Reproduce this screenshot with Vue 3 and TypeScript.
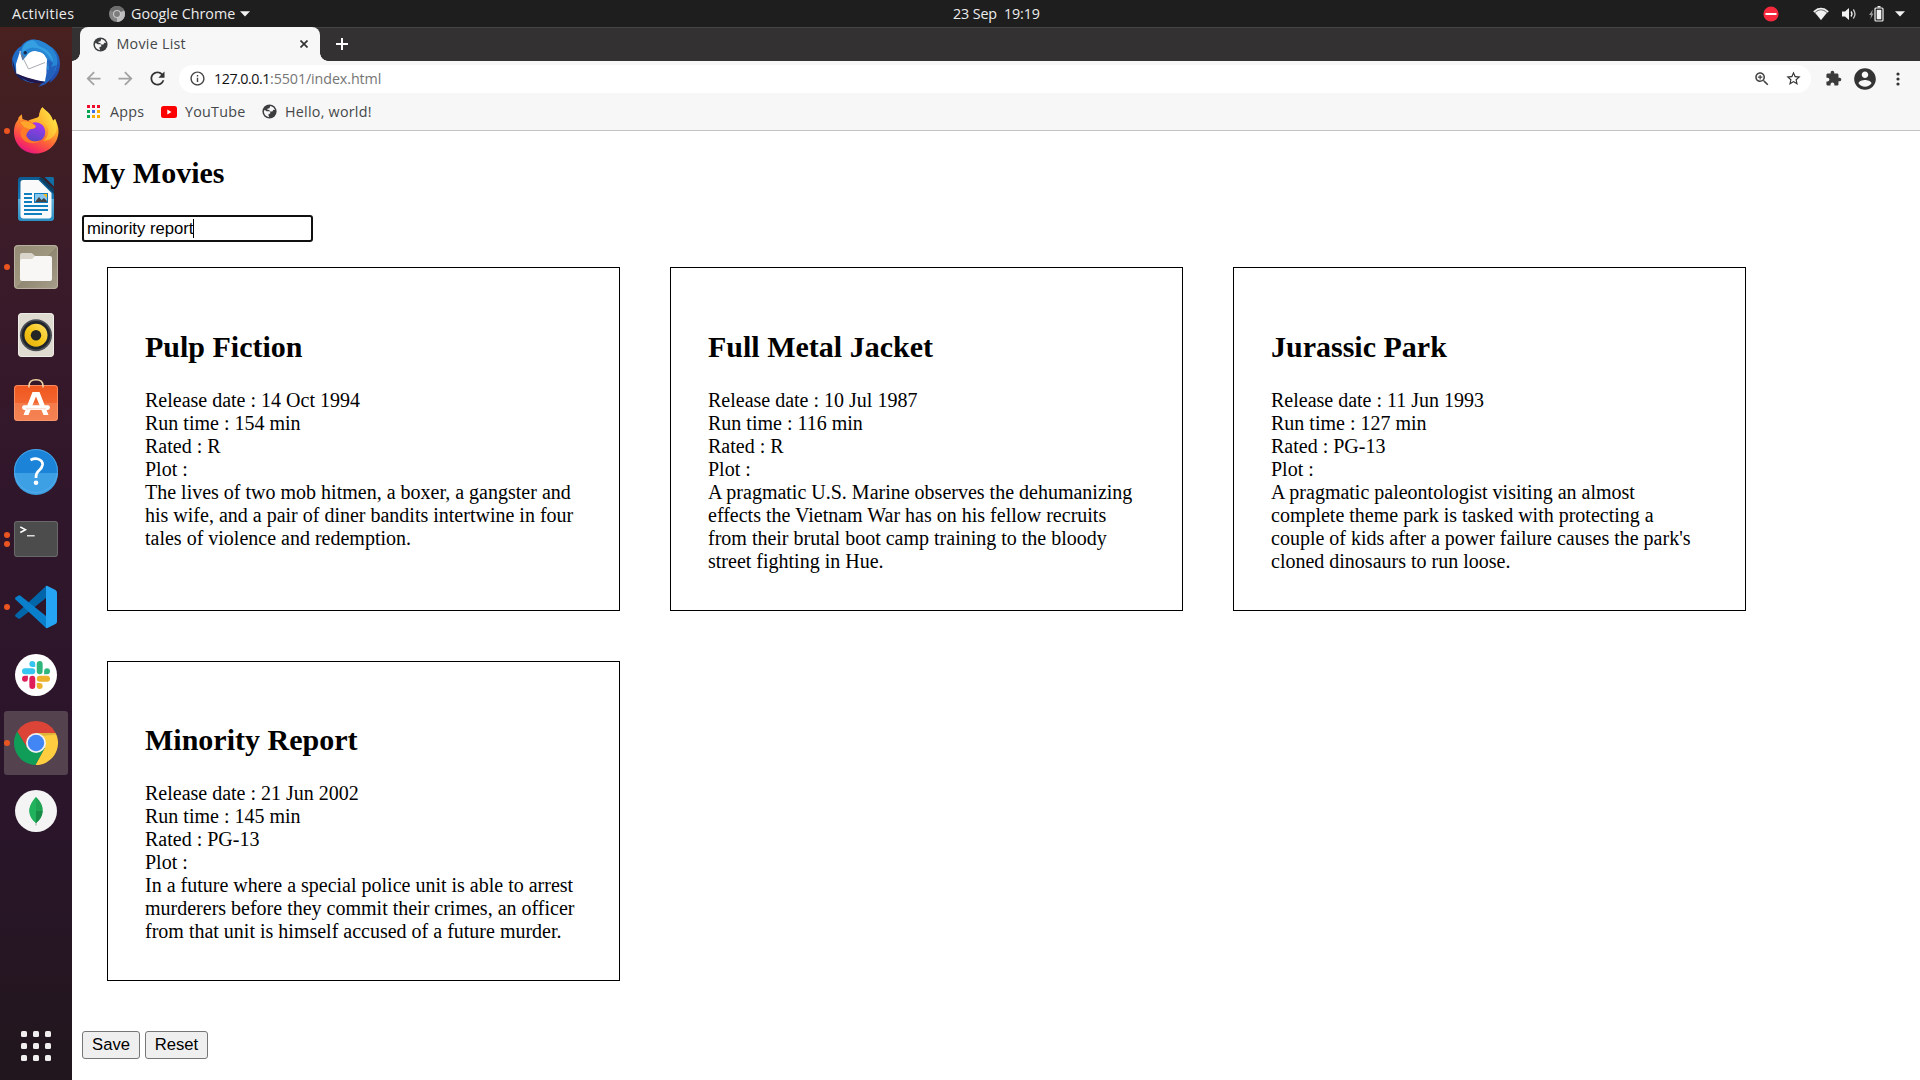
<script setup lang="ts">
interface Movie {
  title: string
  released: string
  runtime: string
  rated: string
  plot: string
}

interface DockItem {
  name: string
  windows: number
  active?: boolean
}

const dock: DockItem[] = [
  { name: 'thunderbird', windows: 0 },
  { name: 'firefox', windows: 1 },
  { name: 'writer', windows: 0 },
  { name: 'files', windows: 1 },
  { name: 'rhythmbox', windows: 0 },
  { name: 'software', windows: 0 },
  { name: 'help', windows: 0 },
  { name: 'terminal', windows: 2 },
  { name: 'vscode', windows: 1 },
  { name: 'slack', windows: 0 },
  { name: 'chrome', windows: 1, active: true },
  { name: 'mongo', windows: 0 },
]

const query = 'minority report'

const movies: Movie[] = [
  {
    title: 'Pulp Fiction',
    released: '14 Oct 1994',
    runtime: '154 min',
    rated: 'R',
    plot: 'The lives of two mob hitmen, a boxer, a gangster and his wife, and a pair of diner bandits intertwine in four tales of violence and redemption.',
  },
  {
    title: 'Full Metal Jacket',
    released: '10 Jul 1987',
    runtime: '116 min',
    rated: 'R',
    plot: 'A pragmatic U.S. Marine observes the dehumanizing effects the Vietnam War has on his fellow recruits from their brutal boot camp training to the bloody street fighting in Hue.',
  },
  {
    title: 'Jurassic Park',
    released: '11 Jun 1993',
    runtime: '127 min',
    rated: 'PG-13',
    plot: "A pragmatic paleontologist visiting an almost complete theme park is tasked with protecting a couple of kids after a power failure causes the park's cloned dinosaurs to run loose.",
  },
  {
    title: 'Minority Report',
    released: '21 Jun 2002',
    runtime: '145 min',
    rated: 'PG-13',
    plot: 'In a future where a special police unit is able to arrest murderers before they commit their crimes, an officer from that unit is himself accused of a future murder.',
  },
]

const appColors = ['#f00b2d', '#f00b2d', '#f00b2d', '#00a651', '#3d6fe8', '#fbad00', '#00a651', '#fbad00', '#fbad00']
</script>

<template>
  <div class="desktop">
    <header class="topbar">
      <div class="topbar-left">
        <span class="activities">Activities</span>
        <svg class="app-glyph" width="16" height="16" viewBox="0 0 16 16">
          <circle cx="8" cy="8" r="8" fill="#858585" />
          <path d="M8 8L1 4.200A8 8 0 0 1 15 4.200z" fill="#6d6d6d" />
          <path d="M8 8L15.200 4.500A8 8 0 0 1 8 16z" fill="#bdbdbd" />
          <circle cx="8" cy="8" r="4" fill="#c9c9c9" />
          <circle cx="8" cy="8" r="2.900" fill="#7d7d7d" />
        </svg>
        <span class="app-name">Google Chrome</span>
        <svg width="10" height="6" viewBox="0 0 10 6"><path d="M0 .3h10L5 5.500z" fill="#f2f2f2" /></svg>
      </div>
      <div class="clock"><span>23 Sep</span><span>19:19</span></div>
      <div class="topbar-right">
        <svg width="16" height="16" viewBox="0 0 16 16">
          <circle cx="8" cy="8" r="7.600" fill="#f5283e" />
          <rect x="2.500" y="7" width="11" height="2" fill="#fff" />
        </svg>
        <svg class="wifi" width="16" height="14" viewBox="0 0 16 14">
          <path d="M.3 4.200Q8-2.500 15.700 4.200L8 13z" fill="#777" />
          <path d="M.3 4.200Q8-2.500 15.700 4.200L14.700 5.400Q8-.7 1.300 5.400z" fill="#f2f2f2" />
          <path d="M2.300 5.800Q8 .8 13.700 5.800L8 13z" fill="#f2f2f2" />
        </svg>
        <svg class="volume" width="16" height="14" viewBox="0 0 16 14">
          <path d="M0 4.500h3L7 1v12L3 9.500H0z" fill="#f2f2f2" />
          <path d="M9 4.500Q11 7 9 9.500" fill="none" stroke="#f2f2f2" stroke-width="1.300" />
          <path d="M11.300 2.500Q14.700 7 11.300 11.500" fill="none" stroke="#c8c8c8" stroke-width="1.300" />
        </svg>
        <svg class="battery" width="16" height="16" viewBox="0 0 16 16">
          <path d="M3.800 3.500L0 9h2L1.500 13L4.500 7.500H3z" fill="#999" />
          <path d="M8.500 0h3v1.500h-3z" fill="#f2f2f2" />
          <rect x="6" y="2" width="8" height="13" rx="1" fill="none" stroke="#f2f2f2" stroke-width="1.200" />
          <rect x="7.700" y="3.800" width="4.600" height="9.500" fill="#f2f2f2" />
        </svg>
        <svg width="10" height="6" viewBox="0 0 10 6"><path d="M0 .3h10L5 5.500z" fill="#f2f2f2" /></svg>
      </div>
    </header>

    <div class="workspace">
      <nav class="dock">
        <div v-for="item in dock" :key="item.name" class="tile" :class="{ active: item.active }">
          <div class="dots"><i v-for="n in item.windows" :key="n"></i></div>

          <svg v-if="item.name === 'thunderbird'" width="48" height="48" viewBox="0 0 48 48">
            <defs>
              <linearGradient id="tb" x1="0" y1="0" x2="1" y2="1">
                <stop offset="0" stop-color="#1d63c0" /><stop offset=".5" stop-color="#2277d0" /><stop offset="1" stop-color="#22389c" />
              </linearGradient>
            </defs>
            <path d="M19.700.5C26 .2 32 3 37 6.500C45 11 48 18 48 25C48 34 43 41 37 44L39 40.500L33 45.500L26 48L31 43C20 46 14 42 11 41L13 41.500C6 40 0 31 0 22C0 16 5 9 9 7.500C12 3 16 1 19.700.5z" fill="url(#tb)" />
            <path d="M.5 20C0 32 5 40 13 42L4 33z" fill="#17215f" />
            <path d="M8 12.500C14 11 26 11 32 15L35 20L34 42.500C25 42 12 39 4.300 34.500L4 25z" fill="#fff" />
            <path d="M5 34.500C13 38.500 24 41 33 43L30 44C20 45 10 41 5 34.500z" fill="#21164d" />
            <path d="M7.500 12L16.500 30L33 23.500" fill="none" stroke="#a9a9b2" stroke-width="1" />
            <path d="M20 1C26 0 34 3 39 9C45 15 47 22 44 29C43 35 38 41 33 44L34 37L37 31L34.500 31L36 23C35 18 32 14 27 12.500C22 11 17 12.500 14.500 17L10.500 21.500L9 14C9 7 13 2 20 1z" fill="#2786d4" />
            <path d="M20 1C25 2 24 6 29 8C37 11 41 17 41 23C37 16 31 10 24 9C18 8 13 10 10.500 15C9 8 13 3 20 1z" fill="#359fe2" />
            <path d="M36 20L41 24L39 28L45 26L42 32L46 30L40 38L33 44L34 37L37 31z" fill="#2360bd" />
            <circle cx="13.200" cy="13.800" r="1.700" fill="#15294f" />
            <path d="M8.500 14.500L10.300 21L13 18z" fill="#61779c" />
          </svg>

          <svg v-else-if="item.name === 'firefox'" width="48" height="48" viewBox="0 0 48 48">
            <defs>
              <linearGradient id="ffa" x1=".8" y1="0" x2=".3" y2="1">
                <stop offset="0" stop-color="#fff14f" /><stop offset=".35" stop-color="#ffb32c" /><stop offset=".62" stop-color="#ff6a35" /><stop offset=".85" stop-color="#f8325a" /><stop offset="1" stop-color="#e31587" />
              </linearGradient>
              <linearGradient id="ffb" x1=".7" y1="0" x2=".4" y2="1">
                <stop offset="0" stop-color="#a838f2" /><stop offset="1" stop-color="#5747c5" />
              </linearGradient>
              <linearGradient id="ffc" x1="1" y1="0" x2="0" y2="1">
                <stop offset="0" stop-color="#fff44a" /><stop offset="1" stop-color="#ff9a25" />
              </linearGradient>
            </defs>
            <path d="M30.300.3C34 4 38 6 40 11L41 14L43 12C45 16 46.700 20 46.500 25C46 37 36 46.500 24 46.500C11 46.500 2 37 2 25C2 19 4 15 6 13L6.500 10.500L9.700 7.300L10.500 12L16 14C20 11 25 12 27 9C28 6 28 3 30.300.3z" fill="url(#ffa)" />
            <path d="M30.300.3C26 6 26 12 32 16C38 20 38 29 31 34C37 34 42 30 44 25C46 18 43 12 43 12L41 14C39 7 34 5 30.300.3z" fill="url(#ffc)" />
            <circle cx="23.500" cy="25" r="9.800" fill="url(#ffb)" />
            <path d="M6 15C10 12 18 13 23 18C25 20 23 22 19 22C17 23 15 25 14 29C16 34 23 36 29 33C24 38 14 37 10 31C7 26 9 22 12 20L7 18z" fill="#ff7a28" />
            <path d="M8 15C13 13 19 15 23.500 19C24 21 21 22 17 22L12 20z" fill="#ffa62b" />
          </svg>

          <svg v-else-if="item.name === 'writer'" width="48" height="48" viewBox="0 0 48 48">
            <defs>
              <linearGradient id="wr" x1="0" y1="0" x2="0" y2="1">
                <stop offset="0" stop-color="#0d5b91" /><stop offset=".5" stop-color="#1679b5" /><stop offset=".51" stop-color="#5eafd9" /><stop offset="1" stop-color="#2a8fc5" />
              </linearGradient>
            </defs>
            <path d="M9 2H28L42 16V43Q42 46 39 46H9Q6 46 6 43V5Q6 2 9 2z" fill="url(#wr)" />
            <path d="M11 5H26.500L39.500 18V40.500Q39.500 43.500 36.500 43.500H11.500Q8.500 43.500 8.500 40.500V7.500Q8.500 5 11 5z" fill="#fafafa" />
            <path d="M26.500 3L30.500 3L42 14V19z" fill="#0b3f63" />
            <path d="M32.500 2H40.500Q42 2 42 3.500V11.500z" fill="#126fa5" />
            <path d="M12 19h8M12 23h8M12 27h8M12 31h24M12 35h24M12 39h18" stroke="#0f7fc0" stroke-width="2" />
            <rect x="22" y="18" width="14" height="10" fill="#0f7fc0" />
            <rect x="23" y="19" width="12" height="8" fill="#86c7ee" />
            <path d="M23 27L27 22L29.500 25L32 23L35 26V27z" fill="#444" />
            <path d="M31 19h4v4z" fill="#f8b81d" />
          </svg>

          <svg v-else-if="item.name === 'files'" width="48" height="48" viewBox="0 0 48 48">
            <defs>
              <linearGradient id="fi" x1="0" y1="0" x2="1" y2="1">
                <stop offset="0" stop-color="#948a75" /><stop offset=".5" stop-color="#a0977f" /><stop offset=".51" stop-color="#918873" /><stop offset="1" stop-color="#a69e8a" />
              </linearGradient>
            </defs>
            <rect x="2" y="2" width="44" height="44" rx="4" fill="url(#fi)" />
            <rect x="2.500" y="2.500" width="43" height="43" rx="3.500" fill="none" stroke="#b8b1a1" />
            <path d="M8 12Q8 10 10 10H19Q20 10 21 11L23.500 13.500H38V20H8z" fill="#d9d5cb" />
            <path d="M8 18Q8 16 10 16H20L23 13H38Q40 13 40 15V36Q40 38 38 38H10Q8 38 8 36z" fill="#f8f7f5" />
          </svg>

          <svg v-else-if="item.name === 'rhythmbox'" width="48" height="48" viewBox="0 0 48 48">
            <defs>
              <linearGradient id="rb" x1="0" y1="1" x2="1" y2="0">
                <stop offset="0" stop-color="#e6ad0b" /><stop offset=".5" stop-color="#f5c71b" /><stop offset="1" stop-color="#ffe06e" />
              </linearGradient>
            </defs>
            <rect x="6" y="2" width="36" height="44" rx="4" fill="#dfdbd1" />
            <rect x="6.500" y="2.500" width="35" height="43" rx="3.500" fill="none" stroke="#eeece6" />
            <circle cx="24" cy="24.200" r="16" fill="#4b4f55" />
            <circle cx="24" cy="24.200" r="14.200" fill="#20242b" />
            <circle cx="24" cy="24.200" r="11.500" fill="url(#rb)" />
            <circle cx="24" cy="24.200" r="5.200" fill="#252525" />
          </svg>

          <svg v-else-if="item.name === 'software'" width="48" height="48" viewBox="0 0 48 48">
            <defs>
              <linearGradient id="so" x1="0" y1="0" x2="0" y2="1">
                <stop offset="0" stop-color="#f0571f" /><stop offset=".5" stop-color="#f3652f" /><stop offset=".51" stop-color="#f47b4b" /><stop offset="1" stop-color="#f48354" />
              </linearGradient>
            </defs>
            <rect x="2" y="6" width="44" height="36" rx="3.500" fill="url(#so)" />
            <rect x="2.500" y="6.500" width="43" height="35" rx="3" fill="none" stroke="#f79a74" stroke-width=".8" />
            <path d="M17 8.500V7Q17 .8 24 .8T31 7V8.500" fill="none" stroke="#f1d3a3" stroke-width="1.600" />
            <path d="M11.500 36L20.500 13H27.500L36.500 36H31.500L24 17.500L16.500 36z" fill="#fff" />
            <rect x="10" y="26.300" width="28" height="4.600" rx="2.300" fill="#fff" />
            <path d="M14 29.800h20" stroke="#f7c9b6" stroke-width=".8" />
          </svg>

          <svg v-else-if="item.name === 'help'" width="48" height="48" viewBox="0 0 48 48">
            <circle cx="24" cy="24" r="22" fill="#1b84d8" />
            <path d="M2 26H46A22 22 0 0 1 2 26z" fill="#3d9fe4" />
            <circle cx="24" cy="24" r="21.500" fill="none" stroke="#5db2ec" stroke-width=".7" />
            <path d="M18.500 13Q23 11 26 12Q31 13.500 30.500 18Q30 21 27 23.500Q24 26 24 30V31" fill="none" stroke="#fff" stroke-width="2.700" />
            <circle cx="24" cy="35.700" r="2.300" fill="#fff" />
          </svg>

          <svg v-else-if="item.name === 'terminal'" width="48" height="48" viewBox="0 0 48 48">
            <rect x="2" y="6" width="44" height="36" rx="3" fill="#4c4c4c" />
            <rect x="2.500" y="6.500" width="43" height="35" rx="2.500" fill="none" stroke="#6c6c6c" stroke-width=".9" />
            <path d="M8.300 12L13.500 14.700L8.300 17.500" fill="none" stroke="#fff" stroke-width="1.500" />
            <path d="M15 20.800h7.700" stroke="#fff" stroke-width="1.200" />
          </svg>

          <svg v-else-if="item.name === 'vscode'" width="48" height="48" viewBox="0 0 48 48">
            <path d="M3.500 31.500Q2.500 32.500 3.500 33.500L6 35.500Q7.500 36 8.500 35.300L34 15V3z" fill="#0065a9" />
            <path d="M3.500 16.500Q2.500 15.500 3.500 14.500L6 12.700Q7.500 12 8.500 12.700L34 33V45z" fill="#0a7fcb" />
            <path d="M34 3Q34.500 2.700 35.500 3L43.500 7Q45 8 45 9.500V38.500Q45 40 43.500 41L35.500 45Q34.500 45.300 34 45z" fill="#24a4f2" />
          </svg>

          <svg v-else-if="item.name === 'slack'" width="48" height="48" viewBox="0 0 48 48">
            <circle cx="24" cy="24" r="21" fill="#fff" />
            <g transform="translate(10 10) scale(1.167)">
              <path fill="#e01e5a" d="M5.042 15.165a2.528 2.528 0 0 1-2.520 2.523A2.528 2.528 0 0 1 0 15.165a2.527 2.527 0 0 1 2.522-2.520h2.520v2.520zM6.313 15.165a2.527 2.527 0 0 1 2.521-2.520 2.527 2.527 0 0 1 2.521 2.520v6.313A2.528 2.528 0 0 1 8.834 24a2.528 2.528 0 0 1-2.521-2.522v-6.313z" />
              <path fill="#36c5f0" d="M8.834 5.042a2.528 2.528 0 0 1-2.521-2.520A2.528 2.528 0 0 1 8.834 0a2.528 2.528 0 0 1 2.521 2.522v2.520H8.834zM8.834 6.313a2.528 2.528 0 0 1 2.521 2.521 2.528 2.528 0 0 1-2.521 2.521H2.522A2.528 2.528 0 0 1 0 8.834a2.528 2.528 0 0 1 2.522-2.521h6.312z" />
              <path fill="#2eb67d" d="M18.956 8.834a2.528 2.528 0 0 1 2.522-2.521A2.528 2.528 0 0 1 24 8.834a2.528 2.528 0 0 1-2.522 2.521h-2.522V8.834zM17.688 8.834a2.528 2.528 0 0 1-2.523 2.521 2.527 2.527 0 0 1-2.520-2.521V2.522A2.527 2.527 0 0 1 15.165 0a2.528 2.528 0 0 1 2.523 2.522v6.312z" />
              <path fill="#ecb22e" d="M15.165 18.956a2.528 2.528 0 0 1 2.523 2.522A2.528 2.528 0 0 1 15.165 24a2.527 2.527 0 0 1-2.520-2.522v-2.522h2.520zM15.165 17.688a2.527 2.527 0 0 1-2.520-2.523 2.526 2.526 0 0 1 2.520-2.520h6.313A2.527 2.527 0 0 1 24 15.165a2.528 2.528 0 0 1-2.522 2.523h-6.313z" />
            </g>
          </svg>

          <svg v-else-if="item.name === 'chrome'" width="48" height="48" viewBox="0 0 48 48">
            <path d="M24 14H43.600A22 22 0 0 0 5.200 12.600L15.300 29z" fill="#db4437" />
            <path d="M24 14H43.600A22 22 0 0 1 23.400 46L32.700 29z" fill="#ffcd40" />
            <path d="M15.300 29L5.200 12.600A22 22 0 0 0 23.400 46L32.700 29z" fill="#0f9d58" />
            <path d="M24 14H43.600L44 15.500L30 17z" fill="#000" opacity=".12" />
            <circle cx="24" cy="24" r="10" fill="#f1f1f1" />
            <circle cx="24" cy="24" r="8.200" fill="#4285f4" />
          </svg>

          <svg v-else width="48" height="48" viewBox="0 0 48 48">
            <circle cx="24" cy="24" r="21" fill="#f4f4f4" />
            <path d="M24 35v3.500" stroke="#9aa79b" stroke-width="1" />
            <path d="M24 10C29 15 31 19 30.700 24C30.400 29 28 33 24 36C20 33 17.500 29 17.400 24C17.300 19 20 15 24 10z" fill="#1fa254" />
            <path d="M24 10C20 15 17.300 19 17.400 24C17.500 29 20 33 24 36z" fill="#21b25d" />
            <path d="M24 24L30.700 24C30.400 29 28 33 24 36z" fill="#168c47" />
          </svg>
        </div>
        <div class="show-apps"><i v-for="n in 9" :key="n"></i></div>
      </nav>

      <main class="browser">
        <div class="tabstrip">
          <div class="tab-edge left"><i></i></div>
          <div class="tab">
            <svg width="17" height="17" viewBox="0 0 24 24">
              <circle cx="12" cy="12" r="10" fill="#3b3d3f" />
              <path d="M4 12.500L5 9.500L8 11.500H11.500Q13 11.500 13 13V15H11.500Q10.500 15 10.500 17L11.500 20Q5 19.500 4 12.500zM13 4.200Q18 5 19.800 10L17.500 9.500L16 12H13L11.500 10L9 9.500V8L12 7.500z" fill="#f7f7f7" />
            </svg>
            <span class="tab-title">Movie List</span>
            <svg class="close" width="8" height="8" viewBox="0 0 8 8"><path d="M.5.5l7 7M7.500.5l-7 7" stroke="#333" stroke-width="1.700" /></svg>
          </div>
          <div class="tab-edge right"><i></i></div>
          <svg class="new-tab" width="12" height="12" viewBox="0 0 12 12"><path d="M6 0v12M0 6h12" stroke="#fff" stroke-width="2" /></svg>
        </div>

        <div class="toolbar">
          <svg width="21" height="21" viewBox="0 0 24 24" fill="#a2a2a2"><path d="M20 11H7.830l5.590-5.590L12 4l-8 8 8 8 1.410-1.410L7.830 13H20v-2z" /></svg>
          <svg width="21" height="21" viewBox="0 0 24 24" fill="#a2a2a2"><path d="M4 11h12.170l-5.590-5.590L12 4l8 8-8 8-1.410-1.410L16.170 13H4v-2z" /></svg>
          <svg width="21" height="21" viewBox="0 0 24 24" fill="#333"><path d="M17.650 6.350C16.200 4.900 14.210 4 12 4c-4.420 0-7.990 3.580-7.990 8s3.570 8 7.990 8c3.730 0 6.840-2.550 7.730-6h-2.080c-.82 2.330-3.040 4-5.650 4-3.310 0-6-2.690-6-6s2.690-6 6-6c1.660 0 3.140.69 4.220 1.780L13 11h7V4l-2.350 2.350z" /></svg>
          <div class="omnibox">
            <svg width="17" height="17" viewBox="0 0 24 24" fill="#444"><path d="M11 7h2v2h-2zm0 4h2v6h-2zm1-9C6.480 2 2 6.480 2 12s4.480 10 10 10 10-4.480 10-10S17.520 2 12 2zm0 18c-4.410 0-8-3.590-8-8s3.590-8 8-8 8 3.590 8 8-3.590 8-8 8z" /></svg>
            <span class="host">127.0.0.1</span><span class="path">:5501/index.html</span>
            <svg class="zoom" width="18" height="18" viewBox="0 0 24 24" fill="#444"><path d="M15.500 14h-.79l-.28-.27C15.410 12.590 16 11.110 16 9.500 16 5.910 13.090 3 9.500 3S3 5.910 3 9.500 5.910 16 9.500 16c1.610 0 3.090-.59 4.230-1.570l.27.28v.79l5 4.990L20.490 19l-4.990-5zm-6 0C7.010 14 5 11.990 5 9.500S7.010 5 9.500 5 14 7.010 14 9.500 11.990 14 9.500 14zM12.500 8.700h-2.200v-2.200H8.700v2.200H6.500v1.600h2.200v2.200h1.600v-2.200h2.200z" /></svg>
            <svg width="17" height="17" viewBox="0 0 24 24" fill="#333"><path d="M22 9.240l-7.190-.62L12 2 9.190 8.630 2 9.240l5.460 4.730L5.820 21 12 17.270 18.180 21l-1.630-7.030L22 9.240zM12 15.400l-3.760 2.270 1-4.280-3.320-2.880 4.380-.38L12 6.100l1.710 4.040 4.380.38-3.320 2.880 1 4.280L12 15.400z" /></svg>
          </div>
          <svg class="puzzle" width="17" height="17" viewBox="0 0 24 24" fill="#3b3b3b"><path d="M20.500 11H19V7c0-1.100-.9-2-2-2h-4V3.500C13 2.120 11.880 1 10.500 1S8 2.120 8 3.500V5H4c-1.100 0-1.990.9-1.990 2v3.800H3.500c1.490 0 2.700 1.210 2.700 2.700s-1.210 2.700-2.700 2.700H2V20c0 1.100.9 2 2 2h3.800v-1.500c0-1.490 1.210-2.700 2.700-2.700 1.490 0 2.700 1.210 2.700 2.700V22H17c1.100 0 2-.9 2-2v-4h1.500c1.380 0 2.500-1.120 2.500-2.500S21.880 11 20.500 11z" /></svg>
          <svg class="account" width="26" height="26" viewBox="0 0 24 24" fill="#333"><path d="M12 2C6.480 2 2 6.480 2 12s4.480 10 10 10 10-4.480 10-10S17.520 2 12 2zm0 3c1.660 0 3 1.340 3 3s-1.340 3-3 3-3-1.340-3-3 1.340-3 3-3zm0 14.200c-2.500 0-4.710-1.280-6-3.220.03-1.990 4-3.080 6-3.080 1.990 0 5.970 1.090 6 3.080-1.290 1.940-3.500 3.220-6 3.220z" /></svg>
          <svg class="more" width="4" height="14" viewBox="0 0 4 14" fill="#333"><circle cx="2" cy="2" r="1.600" /><circle cx="2" cy="7" r="1.600" /><circle cx="2" cy="12" r="1.600" /></svg>
        </div>

        <div class="bookmarks">
          <div class="apps-grid"><i v-for="(c, n) in appColors" :key="n" :style="{ background: c }"></i></div>
          <span class="bm-apps">Apps</span>
          <svg width="16" height="12" viewBox="0 0 16 12"><rect width="16" height="12" rx="2.500" fill="#f00" /><path d="M6.300 3.500v5L10.500 6z" fill="#fff" /></svg>
          <span class="bm-youtube">YouTube</span>
          <svg width="17" height="17" viewBox="0 0 24 24">
            <circle cx="12" cy="12" r="10" fill="#3b3d3f" />
            <path d="M4 12.500L5 9.500L8 11.500H11.500Q13 11.500 13 13V15H11.500Q10.500 15 10.500 17L11.500 20Q5 19.500 4 12.500zM13 4.200Q18 5 19.800 10L17.500 9.500L16 12H13L11.500 10L9 9.500V8L12 7.500z" fill="#f7f7f7" />
          </svg>
          <span class="bm-hello">Hello, world!</span>
        </div>

        <section class="page">
          <h2>My Movies</h2>
          <div class="search" role="textbox">{{ query }}<i class="cursor"></i></div>
          <div class="movies">
            <article v-for="movie in movies" :key="movie.title" class="movie">
              <h2>{{ movie.title }}</h2>
              <div>Release date : {{ movie.released }}</div>
              <div>Run time : {{ movie.runtime }}</div>
              <div>Rated : {{ movie.rated }}</div>
              <div>Plot :</div>
              <div>{{ movie.plot }}</div>
            </article>
          </div>
          <div class="actions">
            <button class="save">Save</button>
            <button class="reset">Reset</button>
          </div>
        </section>
      </main>
    </div>
  </div>
</template>

<style>
body {
  overflow: hidden;
}
</style>

<style scoped>
.desktop {
  width: 1920px;
  height: 1080px;
  display: flex;
  flex-direction: column;
  overflow: hidden;
  background: #fff;
  font-family: "Open Sans", "Noto Sans", sans-serif;
  font-size: 14.300px;
}

svg {
  display: block;
  flex: none;
}

span {
  white-space: nowrap;
  flex: none;
}

.topbar {
  height: 27px;
  flex: none;
  display: grid;
  grid-template-columns: 953px 1fr 149px;
  align-items: center;
  background: #1e1e1e;
  color: #ececec;
}

.topbar-left,
.topbar-right,
.clock {
  display: flex;
  align-items: center;
}

.topbar span {
  padding-bottom: 1px;
}

.topbar-left {
  padding-left: 12px;
}

.activities {
  width: 97px;
  letter-spacing: 0.350px;
}

.app-glyph {
  margin-right: 6px;
}

.app-name {
  width: 109px;
}

.clock {
  gap: 7px;
  letter-spacing: -0.120px;
}

.topbar-right {
  margin-left: -8px;
}

.wifi {
  margin-left: 34px;
}

.volume {
  margin-left: 13px;
}

.battery {
  margin: 0 10px 0 11px;
}

.workspace {
  flex: 1;
  min-height: 0;
  display: flex;
}

.dock {
  width: 72px;
  flex: none;
  box-sizing: border-box;
  padding: 4px 4px 19px;
  display: flex;
  flex-direction: column;
  gap: 4px;
  background: linear-gradient(#48211f, #3a1b29 22%, #30162b 45%, #2a152a 75%, #22161e 97%);
}

.tile {
  position: relative;
  width: 64px;
  height: 64px;
  flex: none;
  display: flex;
  align-items: center;
  justify-content: center;
  border-radius: 3px;
}

.tile.active {
  background: #54424f;
}

.dots {
  position: absolute;
  left: 0;
  top: 0;
  height: 100%;
  display: flex;
  flex-direction: column;
  justify-content: center;
  gap: 3px;
}

.dots i {
  width: 6px;
  height: 6px;
  border-radius: 50%;
  background: #e95420;
}

.show-apps {
  width: 30px;
  margin: auto auto 0;
  display: grid;
  grid-template-columns: repeat(3, 6px);
  justify-content: space-between;
  row-gap: 6px;
}

.show-apps i {
  height: 6px;
  border-radius: 1.500px;
  background: #f0eeee;
}

.browser {
  flex: 1;
  min-width: 0;
  display: flex;
  flex-direction: column;
}

.tabstrip {
  height: 34px;
  flex: none;
  box-sizing: border-box;
  display: flex;
  background: linear-gradient(#464445 1px, #333132 1px);
}

.tab-edge {
  width: 8px;
  display: flex;
  align-items: flex-end;
}

.tab-edge i {
  width: 8px;
  height: 8px;
}

.tab-edge.left i {
  background: radial-gradient(circle at 0 0, transparent 7.500px, #f7f7f7 8px);
}

.tab-edge.right i {
  background: radial-gradient(circle at 100% 0, transparent 7.500px, #f7f7f7 8px);
}

.tab {
  width: 240px;
  box-sizing: border-box;
  padding: 0 12px 0 11.500px;
  display: flex;
  align-items: center;
  border-radius: 8px 8px 0 0;
  background: #f7f7f7;
  color: #45474a;
}

.tab-title {
  margin-left: 8px;
  padding-bottom: 2px;
  letter-spacing: 0.250px;
}

.close {
  margin-left: auto;
}

.new-tab {
  margin: 11px 0 0 8px;
}

.toolbar {
  height: 36px;
  flex: none;
  box-sizing: border-box;
  padding: 0 18.500px 1px 11px;
  display: flex;
  align-items: center;
  gap: 11px;
  background: #f7f7f7;
}

.omnibox {
  width: 1632px;
  height: 28px;
  box-sizing: border-box;
  padding: 0 9px 0 10px;
  display: flex;
  align-items: center;
  border-radius: 14px;
  background: #fff;
}

.host,
.path {
  padding-bottom: 1px;
}

.host {
  margin-left: 8px;
  width: 56px;
  color: #111;
  letter-spacing: -0.480px;
}

.path {
  color: #757575;
  letter-spacing: -0.100px;
}

.zoom {
  margin: 0 14px 0 auto;
}

.puzzle {
  margin-left: 3px;
}

.account {
  margin-left: -1px;
}

.more {
  margin-left: 7px;
}

.bookmarks {
  height: 34px;
  flex: none;
  box-sizing: border-box;
  padding: 0 0 4px 15px;
  display: flex;
  align-items: center;
  background: #f7f7f7;
  border-bottom: 1px solid #c3c3c3;
  color: #45474a;
  letter-spacing: 0.250px;
}

.apps-grid {
  width: 13px;
  display: grid;
  grid-template-columns: repeat(3, 3px);
  gap: 2px;
}

.apps-grid i {
  height: 3px;
}

.bm-apps {
  margin-left: 10px;
  width: 51px;
}

.bm-youtube {
  margin-left: 8px;
  width: 76px;
}

.bm-hello {
  margin-left: 7px;
}

.page {
  flex: 1;
  display: flex;
  flex-direction: column;
  padding: 25px 10px 0;
  font-family: "Liberation Serif", serif;
  font-size: 20px;
  line-height: 23px;
  color: #000;
}

.page h2 {
  margin: 0 0 25px;
  font-size: 30px;
  line-height: 34px;
  font-weight: bold;
}

.search {
  width: 231px;
  height: 27px;
  box-sizing: border-box;
  display: flex;
  align-items: center;
  padding-left: 3px;
  border: 2px solid #101010;
  border-radius: 3px;
  font-family: "Liberation Sans", sans-serif;
  font-size: 16.667px;
  line-height: 19px;
}

.cursor {
  width: 1px;
  height: 19px;
  background: #000;
}

.movies {
  display: flex;
  flex-wrap: wrap;
  gap: 50px;
  padding: 25px;
}

.movie {
  width: 513px;
  box-sizing: border-box;
  padding: 36.800px 37px 36.900px;
  border: 1px solid #000;
}

.movie h2 {
  margin-top: 24.900px;
}

.actions {
  display: flex;
  gap: 5px;
  margin-top: 25px;
}

.actions button {
  height: 28px;
  box-sizing: border-box;
  padding: 0 0 1px;
  border: 1px solid #767676;
  border-radius: 3px;
  background: #efefef;
  color: #000;
  font-family: "Liberation Sans", sans-serif;
  font-size: 16.667px;
}

.save {
  width: 58px;
}

.reset {
  width: 63px;
}
</style>
